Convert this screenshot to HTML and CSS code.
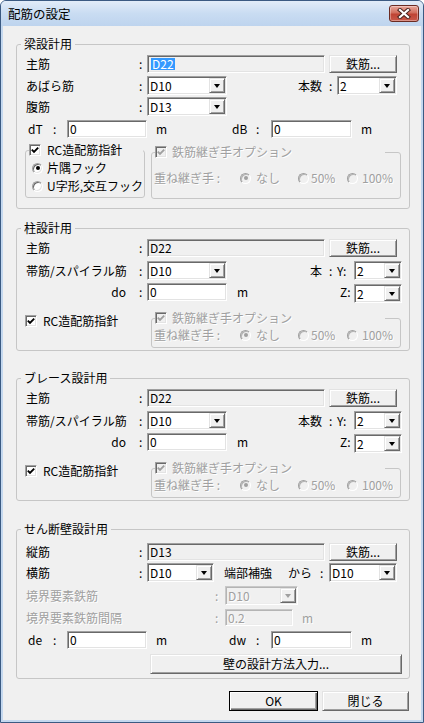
FILE: index.html
```html
<!DOCTYPE html>
<html lang="ja">
<head>
 <meta charset="UTF-8">
 <meta name="viewport" content="width=device-width, initial-scale=1.0">
 <title>配筋の設定</title>
 <link rel="stylesheet" href="styles.css">
</head>
<body>
 <div class="window">
 <div class="titlebar">
 <span class="title">配筋の設定</span>
 <div class="close-btn">
 <svg width="14" height="11" viewBox="0 0 14 11">
 <path d="M3 2 L11 9 M11 2 L3 9" stroke="#4a2520" stroke-width="4.2" stroke-linecap="square"/>
 <path d="M3 2 L11 9 M11 2 L3 9" stroke="#fff" stroke-width="2.2" stroke-linecap="square"/>
 </svg>
 </div>
 </div>

 <div class="client">
 <!-- 梁 -->
 <fieldset class="group g1">
 <legend>梁設計用</legend>
 <div class="row mt3">
 <span class="lbl">主筋</span><span class="colon">:</span>
 <div class="edit ro w178"><span class="sel">D22</span></div>
 <button class="btn btn-rebar">鉄筋...</button>
 </div>
 <div class="row mt3">
 <span class="lbl">あばら筋</span><span class="colon">:</span>
 <div class="combo w80"><span>D10</span><i class="arrow"></i></div>
 <span class="cnt">本数</span><span class="colon-r">:</span>
 <div class="combo w60 mr5"><span>2</span><i class="arrow"></i></div>
 </div>
 <div class="row mt2">
 <span class="lbl">腹筋</span><span class="colon">:</span>
 <div class="combo w80"><span>D13</span><i class="arrow"></i></div>
 </div>
 <div class="row mt3">
 <span class="dlbl">dT</span><span class="dcolon">:</span>
 <div class="edit w80"><span>0</span></div>
 <span class="unit unit-wide">m</span>
 <span class="dlbl-r">dB</span><span class="dcolon-r">:</span>
 <div class="edit w81"><span>0</span></div>
 <span class="unit">m</span>
 </div>
 <div class="opt-row mt5">
 <fieldset class="rc-box">
 <legend><span class="check"><svg width="8" height="8" viewBox="0 0 8 8"><polyline points="0.8,3.6 3,5.8 7.2,1.6" fill="none" stroke="#000" stroke-width="1.9"/></svg></span>RC造配筋指針</legend>
 <div class="radio-row"><span class="radio on"></span>片隅フック</div>
 <div class="radio-row mt4"><span class="radio"></span>U字形,交互フック</div>
 </fieldset>
 <fieldset class="joint-box tall">
 <legend class="dis"><span class="check dis"><svg width="8" height="8" viewBox="0 0 8 8"><polyline points="0.8,3.6 3,5.8 7.2,1.6" fill="none" stroke="#a0a0a0" stroke-width="1.9"/></svg></span>鉄筋継ぎ手オプション</legend>
 <div class="joint-row dis">
 <span class="joint-lbl">重ね継ぎ手 :</span>
 <span class="ropt o1"><span class="radio on dis"></span>なし</span>
 <span class="ropt o2"><span class="radio dis"></span>50%</span>
 <span class="ropt"><span class="radio dis"></span>100%</span>
 </div>
 </fieldset>
 </div>
 </fieldset>

 <!-- 柱 -->
 <fieldset class="group g2">
 <legend>柱設計用</legend>
 <div class="row mt3">
 <span class="lbl">主筋</span><span class="colon">:</span>
 <div class="edit ro w178"><span>D22</span></div>
 <button class="btn btn-rebar">鉄筋...</button>
 </div>
 <div class="row mt4">
 <span class="lbl">帯筋/スパイラル筋</span><span class="colon">:</span>
 <div class="combo w80"><span>D10</span><i class="arrow"></i></div>
 <span class="hon">本</span><span class="colon-r">:</span><span class="yz">Y:</span>
 <div class="combo w48"><span>2</span><i class="arrow"></i></div>
 </div>
 <div class="row mt2">
 <span class="lbl right">do</span><span class="colon">:</span>
 <div class="edit w80"><span>0</span></div>
 <span class="unit">m</span>
 <span class="yz z">Z:</span>
 <div class="combo w48 low"><span>2</span><i class="arrow"></i></div>
 </div>
 <div class="opt-row mt10">
 <div class="chk-line"><span class="check"><svg width="8" height="8" viewBox="0 0 8 8"><polyline points="0.8,3.6 3,5.8 7.2,1.6" fill="none" stroke="#000" stroke-width="1.9"/></svg></span>RC造配筋指針</div>
 <fieldset class="joint-box short">
 <legend class="dis"><span class="check dis"><svg width="8" height="8" viewBox="0 0 8 8"><polyline points="0.8,3.6 3,5.8 7.2,1.6" fill="none" stroke="#a0a0a0" stroke-width="1.9"/></svg></span>鉄筋継ぎ手オプション</legend>
 <div class="joint-row dis">
 <span class="joint-lbl">重ね継ぎ手 :</span>
 <span class="ropt o1"><span class="radio on dis"></span>なし</span>
 <span class="ropt o2"><span class="radio dis"></span>50%</span>
 <span class="ropt"><span class="radio dis"></span>100%</span>
 </div>
 </fieldset>
 </div>
 </fieldset>

 <!-- ブレース -->
 <fieldset class="group g3">
 <legend>ブレース設計用</legend>
 <div class="row mt3">
 <span class="lbl">主筋</span><span class="colon">:</span>
 <div class="edit ro w178"><span>D22</span></div>
 <button class="btn btn-rebar">鉄筋...</button>
 </div>
 <div class="row mt4">
 <span class="lbl">帯筋/スパイラル筋</span><span class="colon">:</span>
 <div class="combo w80"><span>D10</span><i class="arrow"></i></div>
 <span class="hon">本数</span><span class="colon-r">:</span><span class="yz">Y:</span>
 <div class="combo w48"><span>2</span><i class="arrow"></i></div>
 </div>
 <div class="row mt2">
 <span class="lbl right">do</span><span class="colon">:</span>
 <div class="edit w80"><span>0</span></div>
 <span class="unit">m</span>
 <span class="yz z">Z:</span>
 <div class="combo w48 low"><span>2</span><i class="arrow"></i></div>
 </div>
 <div class="opt-row mt10">
 <div class="chk-line"><span class="check"><svg width="8" height="8" viewBox="0 0 8 8"><polyline points="0.8,3.6 3,5.8 7.2,1.6" fill="none" stroke="#000" stroke-width="1.9"/></svg></span>RC造配筋指針</div>
 <fieldset class="joint-box short">
 <legend class="dis"><span class="check dis"><svg width="8" height="8" viewBox="0 0 8 8"><polyline points="0.8,3.6 3,5.8 7.2,1.6" fill="none" stroke="#a0a0a0" stroke-width="1.9"/></svg></span>鉄筋継ぎ手オプション</legend>
 <div class="joint-row dis">
 <span class="joint-lbl">重ね継ぎ手 :</span>
 <span class="ropt o1"><span class="radio on dis"></span>なし</span>
 <span class="ropt o2"><span class="radio dis"></span>50%</span>
 <span class="ropt"><span class="radio dis"></span>100%</span>
 </div>
 </fieldset>
 </div>
 </fieldset>

 <!-- せん断壁 -->
 <fieldset class="group g4">
 <legend>せん断壁設計用</legend>
 <div class="row mt6">
 <span class="lbl">縦筋</span><span class="colon">:</span>
 <div class="edit ro w178"><span>D13</span></div>
 <button class="btn btn-rebar">鉄筋...</button>
 </div>
 <div class="row mt2">
 <span class="lbl">横筋</span><span class="colon">:</span>
 <div class="combo w67"><span>D10</span><i class="arrow"></i></div>
 <span class="tanbu">端部補強</span><span class="kara">から</span><span class="colon-k">:</span>
 <div class="combo w68"><span>D10</span><i class="arrow"></i></div>
 </div>
 <div class="row mt4 dis">
 <span class="lbl-long">境界要素鉄筋</span><span class="colon-l">:</span>
 <div class="combo dis w73"><span>D10</span><i class="arrow"></i></div>
 </div>
 <div class="row mt3 dis">
 <span class="lbl-long">境界要素鉄筋間隔</span><span class="colon-l">:</span>
 <div class="edit dis w68 h17"><span>0.2</span></div>
 <span class="unit">m</span>
 </div>
 <div class="row mt3">
 <span class="dlbl">de</span><span class="dcolon">:</span>
 <div class="edit w80"><span>0</span></div>
 <span class="unit unit-wide2">m</span>
 <span class="dlbl-r dw">dw</span><span class="dcolon-r">:</span>
 <div class="edit w81"><span>0</span></div>
 <span class="unit">m</span>
 </div>
 <div class="row mt5 tall-row">
 <button class="btn btn-wall">壁の設計方法入力...</button>
 </div>
 </fieldset>

 <div class="footer">
 <button class="btn btn-ok">OK</button>
 <button class="btn btn-close">閉じる</button>
 </div>
 </div>
 </div>
</body>
</html>
```

FILE: styles.css
```css
* {
 margin: 0;
 padding: 0;
 box-sizing: border-box;
}
body {
 font-family: "Noto Sans CJK JP", "Noto Sans", sans-serif;
 font-size: 12px;
 line-height: 14px;
 color: #000;
 background: #fff;
}
.window {
 width: 424px;
 height: 723px;
 display: flex;
 flex-direction: column;
 border: 1px solid #3b5a82;
 border-radius: 6px 6px 0 0;
 background: #c4d8ef;
 overflow: hidden;
}
.titlebar {
 height: 25px;
 flex: none;
 display: flex;
 justify-content: space-between;
 padding: 0 4px 0 7px;
 background: linear-gradient(#e2ecf8, #c9dcf2 50%, #bed4ee);
}
.title {
 font-size: 12.5px;
 line-height: 25px;
 color: #000;
}
.close-btn {
 width: 30px;
 height: 17px;
 margin-top: 4px;
 border: 1px solid #6b2b22;
 border-radius: 3px;
 background: linear-gradient(#e9a89c, #d16e5d 45%, #bf4434 55%, #c9594a);
 box-shadow: inset 0 0 0 1px rgba(255, 255, 255, 0.35);
 display: flex;
 align-items: center;
 justify-content: center;
}
.client {
 flex: 1;
 margin: 0 2px 2px;
 background: #f0f0f0;
 padding: 11px 12px 0 13px;
}

/* group boxes */
.group {
 width: 394px;
 border: 1px solid #c6c6c6;
 border-radius: 3px;
 padding: 0 7px 2px 9px;
}
.group > legend {
 margin-left: -5px;
 padding: 0 3px;
 line-height: 14px;
}
.g1 { padding-bottom: 9px; }
.g2 { margin-top: 12px; }
.g3 { margin-top: 20px; }
.g4 { margin-top: 21px; padding-bottom: 4px; }

.row {
 display: flex;
 align-items: center;
 height: 19px;
}
.tall-row { height: 20px; }
.mt2 { margin-top: 2px; }
.mt3 { margin-top: 3px; }
.mt4 { margin-top: 4px; }
.mt5 { margin-top: 5px; }
.mt6 { margin-top: 6px; }
.mt10 { margin-top: 10px; }
.mr5 { margin-right: 5px; }

.lbl { width: 113px; flex: none; white-space: nowrap; }
.lbl.right { text-align: right; padding-right: 13px; }
.colon { width: 8px; flex: none; }
.cnt { margin-left: auto; }
.colon-r { width: 15px; padding-left: 7px; flex: none; }
.hon { margin-left: auto; }
.yz { width: 17px; flex: none; }
.yz.z { margin-left: auto; width: 14px; }
.dlbl { width: 27px; padding-left: 2px; flex: none; }
.dcolon { width: 14px; flex: none; }
.dlbl-r { width: 24px; flex: none; }
.dlbl-r.dw { width: 27px; }
.dcolon-r { width: 15px; flex: none; }
.unit { margin-left: 9px; }
.unit-wide { width: 76px; flex: none; }
.unit-wide2 { width: 73px; flex: none; }
.g2 .row .edit + .unit, .g3 .row .edit + .unit { margin-left: 10px; }
.tanbu { margin-left: 10px; width: 64px; flex: none; }
.kara { width: 32px; flex: none; }
.colon-k { width: 9px; flex: none; }
.lbl-long { width: 189px; flex: none; }
.colon-l { width: 10px; flex: none; }

.dis {
 color: #a0a0a0;
 text-shadow: 1px 1px 0 #fff;
}

/* text boxes */
.edit, .combo {
 flex: none;
 height: 18px;
 display: flex;
 align-items: center;
 padding: 0 1px 0 2px;
 background: #fff;
 border: 1px solid;
 border-color: #a0a0a0 #fff #fff #a0a0a0;
 box-shadow: inset 1px 1px 0 #696969, inset -1px -1px 0 #e3e3e3;
 white-space: nowrap;
}
.combo { height: 19px; }
.combo.low { margin-top: 4px; }
.edit.ro { background: #f0f0f0; }
.edit.dis, .combo.dis {
 background: #f0f0f0;
 border-color: #c8c8c8 #fff #fff #c8c8c8;
 box-shadow: inset 1px 1px 0 #b4b4b4, inset -1px -1px 0 #ececec;
}
.h17 { height: 17px; }
.sel {
 display: inline-block;
 height: 12px;
 line-height: 12px;
 padding: 0 1px;
 margin-left: 1px;
 background: #3399ff;
 color: #fff;
}
.w48 { width: 48px; }
.w60 { width: 60px; }
.w67 { width: 67px; }
.w68 { width: 68px; }
.w73 { width: 73px; }
.w80 { width: 80px; }
.w81 { width: 81px; }
.w178 { width: 178px; }

.arrow {
 margin-left: auto;
 width: 16px;
 height: 15px;
 display: flex;
 align-items: center;
 justify-content: center;
 background: #f0f0f0;
 border: 1px solid;
 border-color: #e3e3e3 #696969 #696969 #e3e3e3;
 box-shadow: inset 1px 1px 0 #fff, inset -1px -1px 0 #a0a0a0;
}
.arrow::after {
 content: "";
 border-style: solid;
 border-width: 4px 3.5px 0;
 border-color: #000 transparent transparent;
 margin-top: 1px;
}
.combo.dis .arrow::after { border-top-color: #a0a0a0; }

/* buttons */
.btn {
 flex: none;
 font: inherit;
 color: #000;
 height: 18px;
 background: #f0f0f0;
 border: 1px solid;
 border-color: #e3e3e3 #696969 #696969 #e3e3e3;
 box-shadow: inset 1px 1px 0 #fff, inset -1px -1px 0 #a0a0a0;
 cursor: pointer;
}
.btn-rebar {
 width: 68px;
 margin-left: auto;
 margin-right: 5px;
}
.btn-wall {
 width: 252px;
 height: 20px;
 margin-left: 124px;
}
.footer {
 display: flex;
 justify-content: flex-end;
 gap: 4px;
 margin-top: 12px;
}
.btn-ok, .btn-close { height: 20px; }
.btn-ok {
 width: 89px;
 border-color: #000;
 box-shadow: inset 1px 1px 0 #fff, inset -1px -1px 0 #696969, inset -2px -2px 0 #a0a0a0;
}
.btn-close { width: 87px; }

/* check + radio */
.check {
 flex: none;
 width: 12px;
 height: 12px;
 margin-right: 6px;
 display: inline-flex;
 align-items: center;
 justify-content: center;
 background: #fff;
 border: 1px solid;
 border-color: #a0a0a0 #fff #fff #a0a0a0;
 box-shadow: inset 1px 1px 0 #696969, inset -1px -1px 0 #e3e3e3;
}
.check.dis {
 background: #f0f0f0;
 margin-right: 5px;
}
.radio {
 flex: none;
 width: 11px;
 height: 11px;
 border-radius: 50%;
 margin-right: 4px;
 display: inline-flex;
 align-items: center;
 justify-content: center;
 background: #fff;
 border: 1px solid;
 border-color: #a0a0a0 #fff #fff #a0a0a0;
 box-shadow: inset 1px 1px 0 #696969, inset -1px -1px 0 #e3e3e3;
}
.radio.on::after {
 content: "";
 width: 4px;
 height: 4px;
 border-radius: 50%;
 background: #000;
}
.radio.dis { background: #f0f0f0; box-shadow: inset 1px 1px 0 #b4b4b4; }
.radio.dis.on::after { background: #a0a0a0; }

.opt-row {
 display: flex;
 align-items: flex-start;
}
.rc-box {
 width: 120px;
 margin-left: -1px;
 border: 1px solid #c6c6c6;
 border-radius: 3px;
 padding: 4px 0 4px 6px;
}
.rc-box > legend {
 width: 114px;
 margin-left: -3px;
 display: flex;
 align-items: center;
 height: 14px;
}
.radio-row {
 display: flex;
 align-items: center;
 height: 14px;
}
.chk-line {
 width: 126px;
 margin-left: -1px;
 margin-top: 3px;
 height: 14px;
 display: flex;
 align-items: center;
}
.joint-box {
 width: 250px;
 margin-left: 6px;
 margin-top: 2px;
 border: 1px solid #c6c6c6;
 border-radius: 3px;
}
.chk-line + .joint-box { margin-left: 0; margin-top: 0; }
.joint-box.tall { padding: 12px 0 13px 2px; }
.joint-box.short { padding: 3px 0 5px 2px; }
.joint-box > legend {
 width: 230px;
 margin-left: 1px;
 height: 14px;
 display: flex;
 align-items: center;
}
.joint-row {
 display: flex;
 align-items: center;
 height: 14px;
}
.joint-lbl { width: 86px; flex: none; }
.ropt { display: flex; align-items: center; flex: none; }
.ropt.o1 { width: 58px; }
.ropt.o1 .radio { margin-right: 5px; }
.ropt.o2 { width: 49px; }
.ropt.o2 .radio { margin-right: 2px; }
```
